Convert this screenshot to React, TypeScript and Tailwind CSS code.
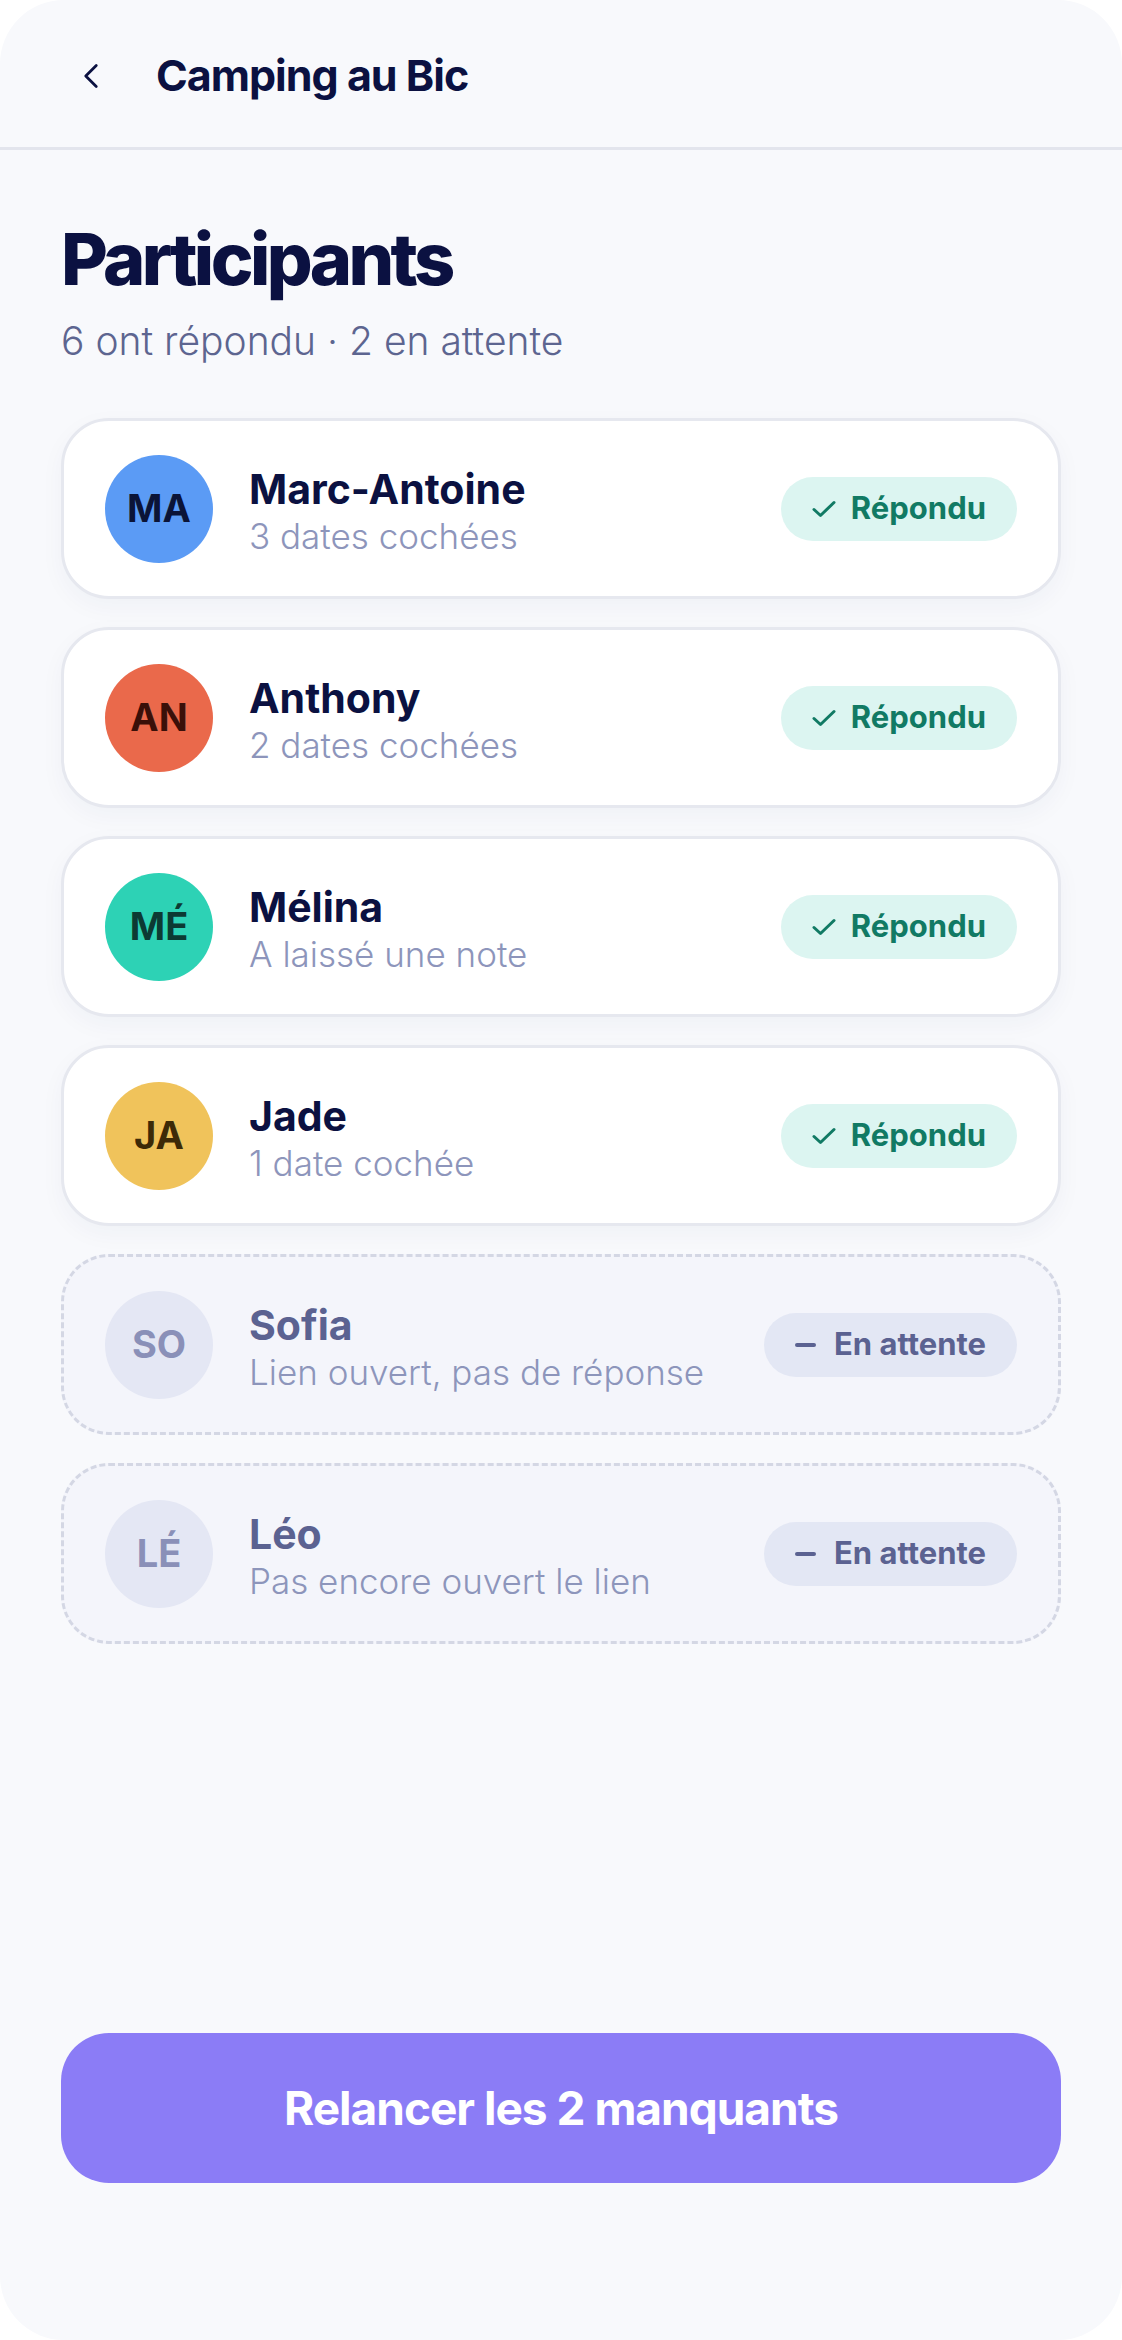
import { ChevronLeft } from "lucide-react";

type Person = {
  initials: string;
  name: string;
  note: string;
  answered: boolean;
  avatar: string;
};

const people: Person[] = [
  { initials: "MA", name: "Marc-Antoine", note: "3 dates cochées", answered: true, avatar: "bg-[#5b9bf5] text-[#0b1437]" },
  { initials: "AN", name: "Anthony", note: "2 dates cochées", answered: true, avatar: "bg-[#ea694b] text-[#3a1009]" },
  { initials: "MÉ", name: "Mélina", note: "A laissé une note", answered: true, avatar: "bg-[#2dd2b5] text-[#0c3a33]" },
  { initials: "JA", name: "Jade", note: "1 date cochée", answered: true, avatar: "bg-[#f0c35b] text-[#3d2a07]" },
  { initials: "SO", name: "Sofia", note: "Lien ouvert, pas de réponse", answered: false, avatar: "bg-[#e4e7f4] text-[#8a90b8]" },
  { initials: "LÉ", name: "Léo", note: "Pas encore ouvert le lien", answered: false, avatar: "bg-[#e4e7f4] text-[#8a90b8]" },
];

function StatusBadge({ answered }: { answered: boolean }) {
  if (answered) {
    return (
      <span className="ml-auto flex h-[64px] shrink-0 items-center gap-[15px] rounded-full bg-[#dcf5f1] px-[31px] text-[31px] font-bold text-[#117a64]">
        <svg viewBox="0 0 24 18" className="h-[18px] w-[24px]" fill="none" stroke="currentColor" strokeWidth="3" strokeLinecap="round" strokeLinejoin="round">
          <path d="M2 9.5l6.5 6L22 2.5" />
        </svg>
        Répondu
      </span>
    );
  }
  return (
    <span className="ml-auto flex h-[64px] shrink-0 items-center gap-[18px] rounded-full bg-[#e3e7f4] px-[31px] text-[31px] font-bold text-[#5b6291]">
      <span className="h-[4px] w-[21px] rounded-full bg-[#5b6291]" />
      En attente
    </span>
  );
}

function ParticipantCard({ p }: { p: Person }) {
  const card = p.answered
    ? "border-solid border-[#e6e8ef] bg-white shadow-[0_8px_24px_rgba(30,40,90,0.04)]"
    : "border-dashed border-[#d4d7e4] bg-[#f4f5fb]";
  return (
    <li className={"flex h-[181px] items-center gap-[36px] rounded-[48px] border-[3px] pl-[41px] pr-[41px] " + card}>
      <div className={"flex h-[108px] w-[108px] shrink-0 items-center justify-center rounded-full text-[38px] font-bold " + p.avatar}>
        {p.initials}
      </div>
      <div className="flex flex-col pt-[8px]">
        <span className={"text-[41px] font-bold leading-[47px] " + (p.answered ? "text-[#0b1141]" : "text-[#5b6291]")}>
          {p.name}
        </span>
        <span className="text-[35px] font-light leading-[47px] text-[#8d95bb]">{p.note}</span>
      </div>
      <StatusBadge answered={p.answered} />
    </li>
  );
}

export default function App() {
  return (
    <div className="min-h-screen bg-white font-['Inter',sans-serif]">
      <div className="flex h-[2340px] flex-col rounded-[64px] bg-[#f8f9fc]">
        <header className="flex h-[150px] items-center gap-[44px] border-b-[3px] border-[#e3e5ed] pl-[70px] pt-[4px]">
          <ChevronLeft className="h-[42px] w-[42px] text-[#0b1141]" strokeWidth={1.6} />
          <h2 className="text-[43px] font-bold tracking-[-1px] text-[#0b1141]">Camping au Bic</h2>
        </header>

        <main className="flex flex-1 flex-col px-[61px]">
          <h1 className="mt-[72px] text-[72px] font-extrabold leading-[74px] tracking-[-3.6px] text-[#0b1141]">
            Participants
          </h1>
          <p className="mt-[26px] text-[39px] font-light leading-[38px] text-[#5d6590]">
            6 ont répondu · 2 en attente
          </p>

          <ul className="mt-[58px] flex flex-col gap-[28px]">
            {people.map((p) => (
              <ParticipantCard key={p.name} p={p} />
            ))}
          </ul>

          <button className="mb-[157px] mt-auto h-[150px] w-full rounded-[48px] bg-[#8b7cf6] text-[46px] font-bold tracking-[-1px] text-white">
            Relancer les 2 manquants
          </button>
        </main>
      </div>
    </div>
  );
}
